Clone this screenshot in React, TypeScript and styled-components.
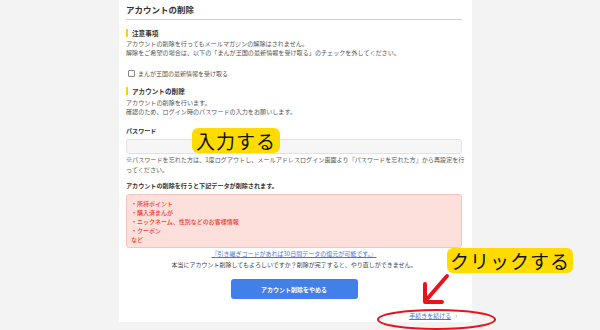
import styled, { createGlobalStyle } from "styled-components"

const GlobalStyle = createGlobalStyle`
  html, body {
    margin: 0;
    padding: 0;
    background: #f3f3f3;
  }
  body {
    font-family: "Noto Sans CJK JP", "Noto Sans", sans-serif;
  }
`

const Page = styled.div`
  position: relative;
  width: 600px;
  height: 330px;
  overflow: hidden;
  background: #f3f3f3;
  padding-left: 119px;
  box-sizing: border-box;
`

const Panel = styled.div`
  width: 353px;
  height: 322px;
  background: #fff;
  box-sizing: border-box;
  padding: 0 10px 0 7px;
  display: flex;
  flex-direction: column;
  color: #555;
`

const Title = styled.h1`
  margin: 0;
  height: 19px;
  line-height: 19px;
  font-size: 8.5px;
  font-weight: 700;
  color: #333;
  border-bottom: 1px solid #cfcfcf;
`

const Heading = styled.h2<{ $mt: number }>`
  margin: ${({ $mt }) => $mt}px 0 0;
  height: 8px;
  line-height: 8px;
  font-size: 6.6px;
  font-weight: 700;
  color: #333;
  border-left: 2px solid #ffcf00;
  padding-left: 4px;
`

const Text = styled.p<{ $mt: number; $lh?: number }>`
  margin: ${({ $mt }) => $mt}px 0 0;
  font-size: 6.1px;
  line-height: ${({ $lh }) => $lh ?? 8.5}px;
  white-space: nowrap;
  color: #555;
`

const CheckRow = styled.label`
  margin-top: 12px;
  height: 8px;
  display: flex;
  align-items: center;
  gap: 3px;
  padding-left: 2px;
  font-size: 6px;
  color: #555;
`

const Box = styled.span`
  width: 5px;
  height: 5px;
  border: 1px solid #888;
  border-radius: 1px;
  background: #fff;
`

const Label = styled.div<{ $mt: number }>`
  margin-top: ${({ $mt }) => $mt}px;
  height: 8px;
  line-height: 8px;
  font-size: 6.1px;
  font-weight: 700;
  color: #333;
`

const Input = styled.div`
  margin-top: 4px;
  height: 15px;
  box-sizing: border-box;
  background: #f6f6f6;
  border: 1px solid #e2e2e2;
  border-radius: 3px;
`

const Warn = styled.div`
  margin-top: 4px;
  height: 54px;
  box-sizing: border-box;
  background: #fde0dc;
  border: 1px solid #f8c3bc;
  border-radius: 3px;
  padding: 3.5px 4px;
  color: #ee3b2b;
  font-size: 6px;
  font-weight: 500;
  line-height: 9px;
`

const Center = styled.div<{ $mt: number }>`
  margin-top: ${({ $mt }) => $mt}px;
  text-align: center;
  font-size: 6px;
  line-height: 8px;
  white-space: nowrap;
  color: #444;
`

const Link = styled.a`
  color: #4d73d9;
  text-decoration: underline;
  cursor: pointer;
`

const Button = styled.button`
  align-self: center;
  margin-top: 10px;
  width: 127px;
  height: 20px;
  border: none;
  border-radius: 3px;
  background: #4280e9;
  color: #fff;
  font-family: inherit;
  font-size: 6px;
  font-weight: 700;
  cursor: pointer;
`

const Continue = styled.div`
  margin-top: 13px;
  padding-right: 5px;
  text-align: right;
  font-size: 6px;
  line-height: 8px;
  color: #4d73d9;

  span {
    margin-left: 4px;
    color: #777;
  }
`

const Tag = styled.div<{ $x: number; $y: number; $w: number }>`
  position: absolute;
  left: ${({ $x }) => $x}px;
  top: ${({ $y }) => $y}px;
  width: ${({ $w }) => $w}px;
  height: 25px;
  border-radius: 6px;
  background: #ffdb00;
  color: #111;
  font-size: 19px;
  line-height: 25px;
  text-align: center;
  letter-spacing: 1px;
`

const Marks = styled.svg`
  position: absolute;
  left: 0;
  top: 0;
  pointer-events: none;
`

export default function App() {
  return (
    <Page>
      <GlobalStyle />
      <Panel>
        <Title>アカウントの削除</Title>

        <Heading $mt={9}>注意事項</Heading>
        <Text $mt={3}>
          アカウントの削除を行ってもメールマガジンの解除はされません。
          <br />
          解除をご希望の場合は、以下の「まんが王国の最新情報を受け取る」のチェックを外してください。
        </Text>

        <CheckRow>
          <Box />
          まんが王国の最新情報を受け取る
        </CheckRow>

        <Heading $mt={10}>アカウントの削除</Heading>
        <Text $mt={4}>
          アカウントの削除を行います。
          <br />
          確認のため、ログイン時のパスワードの入力をお願いします。
        </Text>

        <Label $mt={11}>パスワード</Label>
        <Input />
        <Text $mt={1} $lh={9.5}>
          ※パスワードを忘れた方は、1度ログアウトし、メールアドレスログイン画面より『パスワードを忘れた方』から再設定を行
          <br />
          ってください。
        </Text>

        <Label $mt={8}>アカウントの削除を行うと下記データが削除されます。</Label>
        <Warn>
          ・所持ポイント
          <br />
          ・購入済まんが
          <br />
          ・ニックネーム、性別などのお客様情報
          <br />
          ・クーポン
          <br />
          など
        </Warn>

        <Center $mt={2}>
          <Link>『引き継ぎコードがあれば30日間データの復元が可能です。』</Link>
        </Center>
        <Center $mt={3}>
          本当にアカウント削除してもよろしいですか？削除が完了すると、やり直しができません。
        </Center>

        <Button>アカウント削除をやめる</Button>

        <Continue>
          <Link>手続きを続ける</Link>
          <span>›</span>
        </Continue>
      </Panel>

      <Tag $x={192} $y={128} $w={88}>入力する</Tag>
      <Tag $x={447} $y={248} $w={126}>クリックする</Tag>

      <Marks width="600" height="330" viewBox="0 0 600 330">
        <g stroke="#e8141c" strokeLinecap="round" strokeLinejoin="round" fill="none">
          <path d="M447 276 L428 298" strokeWidth="4" />
          <path d="M425 284 L425 302 L442 302" strokeWidth="4" />
          <ellipse cx="436.5" cy="319.5" rx="58.5" ry="9.5" strokeWidth="2" />
        </g>
      </Marks>
    </Page>
  )
}
